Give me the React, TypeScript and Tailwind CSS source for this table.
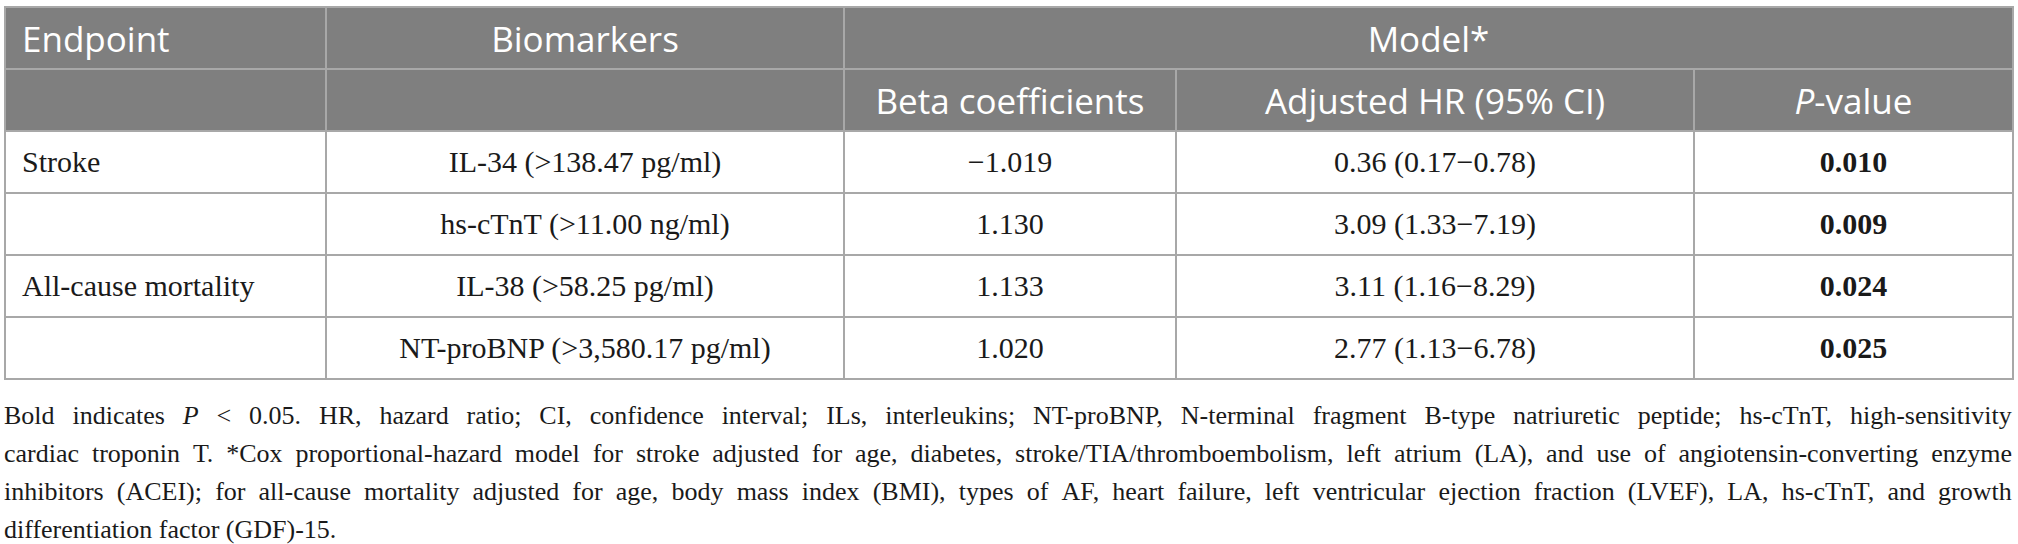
const rows = [
  { endpoint: "Stroke", marker: "IL-34 (>138.47 pg/ml)", beta: "\u22121.019", hr: "0.36 (0.17\u22120.78)", p: "0.010" },
  { endpoint: "", marker: "hs-cTnT (>11.00 ng/ml)", beta: "1.130", hr: "3.09 (1.33\u22127.19)", p: "0.009" },
  { endpoint: "All-cause mortality", marker: "IL-38 (>58.25 pg/ml)", beta: "1.133", hr: "3.11 (1.16\u22128.29)", p: "0.024" },
  { endpoint: "", marker: "NT-proBNP (>3,580.17 pg/ml)", beta: "1.020", hr: "2.77 (1.13\u22126.78)", p: "0.025" },
];

const head = "border-2 border-[#a8a8a8] h-[62px] px-4 align-middle font-normal";
const cell = "border-2 border-[#a8a8a8] h-[62px] px-4 align-middle text-center";
const line = "h-[38px] flex items-center justify-between text-[26px] leading-[38px] whitespace-pre";

function Justified({ words }: { words: React.ReactNode[] }) {
  return (
    <div className={line}>
      {words.map((w, i) => (
        <span key={i}>{w}</span>
      ))}
    </div>
  );
}

const l1 = "Bold indicates".split(" ");
const l1b = "< 0.05. HR, hazard ratio; CI, confidence interval; ILs, interleukins; NT-proBNP, N-terminal fragment B-type natriuretic peptide; hs-cTnT, high-sensitivity".split(" ");
const l2 = "cardiac troponin T. *Cox proportional-hazard model for stroke adjusted for age, diabetes, stroke/TIA/thromboembolism, left atrium (LA), and use of angiotensin-converting enzyme".split(" ");
const l3 = "inhibitors (ACEI); for all-cause mortality adjusted for age, body mass index (BMI), types of AF, heart failure, left ventricular ejection fraction (LVEF), LA, hs-cTnT, and growth".split(" ");

export default function App() {
  return (
    <div className="w-[2018px] h-[544px] bg-white overflow-hidden pl-[4px] pt-[6px]">
      <table className="w-[2008px] table-fixed border-collapse">
        <colgroup>
          <col className="w-[321px]" />
          <col className="w-[518px]" />
          <col className="w-[332px]" />
          <col className="w-[518px]" />
          <col className="w-[319px]" />
        </colgroup>
        <thead className="bg-[#7f7f7f] text-white text-[35px] leading-none" style={{ fontFamily: "'Open Sans', 'Noto Sans', sans-serif" }}>
          <tr>
            <th className={`${head} text-left`}>Endpoint</th>
            <th className={`${head} text-center`}>Biomarkers</th>
            <th colSpan={3} className={`${head} text-center`}>Model*</th>
          </tr>
          <tr>
            <th className={head}></th>
            <th className={head}></th>
            <th className={`${head} text-center`}>Beta coefficients</th>
            <th className={`${head} text-center`}>Adjusted HR (95% CI)</th>
            <th className={`${head} text-center`}>
              <i>P</i>-value
            </th>
          </tr>
        </thead>
        <tbody className="text-[#1a1a1a] text-[30px] leading-none" style={{ fontFamily: "'Liberation Serif', 'Times New Roman', serif" }}>
          {rows.map((r) => (
            <tr key={r.marker}>
              <td className={`${cell} !text-left`}>{r.endpoint}</td>
              <td className={cell}>{r.marker}</td>
              <td className={cell}>{r.beta}</td>
              <td className={cell}>{r.hr}</td>
              <td className={`${cell} font-bold`}>{r.p}</td>
            </tr>
          ))}
        </tbody>
      </table>
      <div className="w-[2008px] mt-[17px] text-[#1a1a1a]" style={{ fontFamily: "'Liberation Serif', 'Times New Roman', serif" }}>
        <Justified words={[...l1, <i>P</i>, ...l1b]} />
        <Justified words={l2} />
        <Justified words={l3} />
        <div className={line}>differentiation factor (GDF)-15.</div>
      </div>
    </div>
  );
}
